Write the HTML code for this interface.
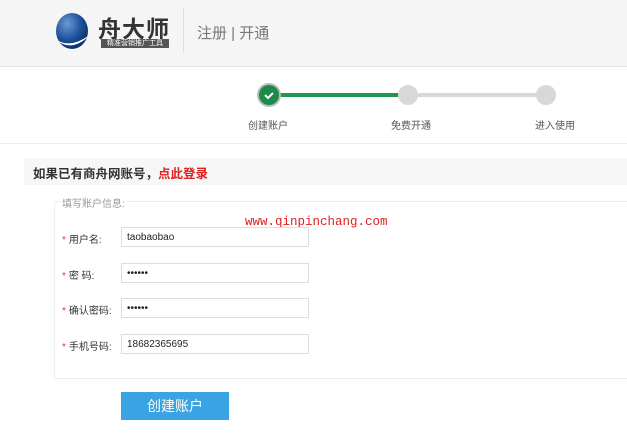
<!DOCTYPE html>
<html><head><meta charset="utf-8"><style>
body{margin:0;width:627px;height:445px;background:#fff;font-family:"Liberation Sans","Noto Sans CJK SC",sans-serif;position:relative;overflow:hidden}
.a{position:absolute}
.hdr{left:0;top:0;width:627px;height:66px;background:#f5f5f5;border-bottom:1px solid #e6e6e6}
.inp{position:absolute;left:121px;height:20px;border:1px solid #ddd;background:#fff;font-size:10px;line-height:20px;padding-left:5px;box-sizing:border-box;width:188px;color:#222}
.lbl{position:absolute;left:62px;font-size:10px;color:#333}
.lbl b{color:#e33;font-weight:normal;margin-right:3px}
.c{position:absolute;width:20px;height:20px;border-radius:50%;background:#d8d8d8;top:85px}
.st{position:absolute;top:117px;font-size:10px;color:#555}
</style></head><body>
<div class="a hdr"></div>
<svg class="a" style="left:54px;top:12px" width="36" height="40" viewBox="0 0 36 40">
<defs><radialGradient id="g" cx="0.35" cy="0.3" r="0.75"><stop offset="0" stop-color="#6a9ad6"/><stop offset="0.6" stop-color="#1d4f98"/><stop offset="1" stop-color="#0a2e66"/></radialGradient></defs>
<ellipse cx="18" cy="19" rx="16" ry="18" fill="url(#g)"/>
<path d="M1 27 Q16 37 34 24 Q30 30 20 33 Q10 35 1 27Z" fill="#fff"/>
</svg>
<div class="a" style="left:98px;top:10px;font-size:23px;font-weight:bold;color:#333;letter-spacing:1px">舟大师</div>
<div class="a" style="left:101px;top:39px;width:68px;height:9px;background:#555;color:#fff;font-size:7px;line-height:9px;text-align:center">精准营销推广工具</div>
<div class="a" style="left:183px;top:8px;width:1px;height:45px;background:#ddd"></div>
<div class="a" style="left:197px;top:22px;font-size:15px;color:#777">注册 | 开通</div>
<div class="a" style="left:269px;top:93px;width:139px;height:4px;background:#1e9650"></div>
<div class="a" style="left:408px;top:93px;width:138px;height:4px;background:#d8d8d8"></div>
<div class="c" style="left:259px;background:#1e8a4a;box-shadow:0 0 0 2px #bbb"><svg width="20" height="20"><path d="M6 10l3 3 5-5" stroke="#fff" stroke-width="2" fill="none"/></svg></div>
<div class="c" style="left:398px"></div>
<div class="c" style="left:536px"></div>
<div class="st" style="left:248px">创建账户</div>
<div class="st" style="left:391px">免费开通</div>
<div class="st" style="left:535px">进入使用</div>
<div class="a" style="left:0;top:143px;width:627px;height:1px;background:#eee"></div>
<div class="a" style="left:24px;top:158px;width:603px;height:27px;background:#f7f7f7"></div>
<div class="a" style="left:33px;top:163px;font-size:12.5px;font-weight:bold;color:#333">如果已有商舟网账号，<span style="color:#e02020">点此登录</span></div>
<div class="a" style="left:54px;top:201px;width:580px;height:176px;border:1px solid #eee;border-radius:3px"></div>
<div class="a" style="left:60px;top:195px;background:#fff;padding:0 2px;font-size:10px;color:#999">填写账户信息:</div>
<div class="a" style="left:245px;top:215px;font-family:'Liberation Mono',monospace;font-size:12.5px;color:#e02020">www.qinpinchang.com</div>
<div class="lbl" style="top:231px"><b>*</b>用户名:</div><div class="inp" style="top:227px">taobaobao</div>
<div class="lbl" style="top:267px"><b>*</b>密 码:</div><div class="inp" style="top:263px">••••••</div>
<div class="lbl" style="top:302px"><b>*</b>确认密码:</div><div class="inp" style="top:298px">••••••</div>
<div class="lbl" style="top:338px"><b>*</b>手机号码:</div><div class="inp" style="top:334px">18682365695</div>
<div class="a" style="left:121px;top:392px;width:108px;height:28px;background:#3aa3e3;color:#fff;font-size:14px;line-height:28px;text-align:center">创建账户</div>
</body></html>
